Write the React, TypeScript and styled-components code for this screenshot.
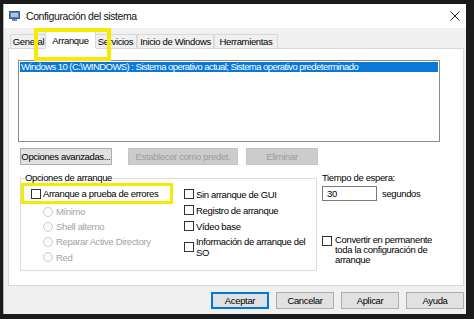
import styled, { createGlobalStyle } from "styled-components";

const GlobalStyle = createGlobalStyle`
  html, body { margin: 0; padding: 0; }
  body {
    background: #1b1b1b;
    font-family: "Liberation Sans", Arial, sans-serif;
    font-size: 9.5px;
    letter-spacing: -0.35px;
    color: #000;
  }
`;

const Window = styled.div`
  position: relative;
  margin: 4px 0 0 3px;
  width: 463px;
  height: 310px;
  background: #f0f0f0;
  border-left: 1px solid #b5b5b5;
  box-sizing: border-box;
  display: flex;
  flex-direction: column;
`;

const TitleBar = styled.div`
  height: 24px;
  flex: none;
  background: #fff;
  display: flex;
  align-items: center;
  padding: 0 0 0 5px;
  gap: 6px;
`;

const Title = styled.span`
  flex: 1;
  font-size: 10.5px;
  letter-spacing: -0.4px;
  color: #111;
`;

const CloseBtn = styled.span`
  width: 22px;
  display: flex;
  justify-content: center;
`;

const TabStrip = styled.div`
  display: flex;
  align-items: flex-end;
  height: 20px;
  flex: none;
  padding-left: 6px;
  position: relative;
  z-index: 1;
`;

const Tab = styled.div<{ $w: number; $active?: boolean }>`
  width: ${(p) => p.$w}px;
  height: ${(p) => (p.$active ? 18 : 15)}px;
  margin: 0 ${(p) => (p.$active ? -2 : 0)}px -1px;
  background: ${(p) => (p.$active ? "#fff" : "#f0f0f0")};
  border: 1px solid #d9d9d9;
  border-bottom: 1px solid ${(p) => (p.$active ? "#fff" : "#d9d9d9")};
  box-sizing: border-box;
  display: flex;
  align-items: center;
  justify-content: center;
  white-space: nowrap;
  position: relative;
  z-index: ${(p) => (p.$active ? 2 : 0)};
`;

const Panel = styled.div`
  margin: 0 2px 0 4px;
  height: 238px;
  flex: none;
  background: #fff;
  border: 1px solid #d9d9d9;
  box-sizing: border-box;
  display: flex;
  flex-direction: column;
  padding: 11px 0 0 9px;
  & > * { flex-shrink: 0; }
`;

const ListBox = styled.div`
  width: 422px;
  height: 82px;
  border: 1px solid #8c8c8c;
  box-sizing: border-box;
  padding: 1px;
`;

const ListItem = styled.div<{ $selected?: boolean }>`
  height: 10px;
  line-height: 10px;
  font-size: 9.5px;
  letter-spacing: -0.55px;
  padding-left: 1px;
  background: ${(p) => (p.$selected ? "#0a78d7" : "transparent")};
  color: ${(p) => (p.$selected ? "#fff" : "#000")};
  white-space: nowrap;
`;

const ButtonRow = styled.div`
  display: flex;
  gap: 8px;
  margin: 6px 0 0 2px;
`;

const Button = styled.div<{ $w: number; $mr?: number; $disabled?: boolean; $default?: boolean }>`
  width: ${(p) => p.$w}px;
  height: 17px;
  margin-right: ${(p) => p.$mr ?? 0}px;
  box-sizing: border-box;
  display: flex;
  align-items: center;
  justify-content: center;
  white-space: nowrap;
  background: ${(p) => (p.$disabled ? "#cccccc" : "#e1e1e1")};
  color: ${(p) => (p.$disabled ? "#9c9c9c" : "#000")};
  border: ${(p) =>
    p.$default ? "2px solid #0078d7" : p.$disabled ? "1px solid #c4c4c4" : "1px solid #adadad"};
`;

const Lower = styled.div`
  display: flex;
  margin: 7px 0 0 2px;
`;

const GroupBox = styled.fieldset`
  margin: 0;
  padding: 0;
  width: 297px;
  height: 99px;
  box-sizing: border-box;
  border: 1px solid #dcdcdc;
  display: flex;
  min-width: 0;
`;

const Legend = styled.legend`
  padding: 0 1px;
  margin-left: 3px;
  line-height: 12px;
`;

const Column = styled.div<{ $w?: number; $pt?: number }>`
  display: flex;
  flex-direction: column;
  width: ${(p) => (p.$w ? `${p.$w}px` : "auto")};
  padding-top: ${(p) => p.$pt ?? 0}px;
`;

const Highlight = styled.div`
  width: 152px;
  height: 21px;
  box-sizing: border-box;
  border: 3px solid #f6ea00;
  display: flex;
  align-items: center;
  padding-left: 7px;
  gap: 2px;
  margin-top: -1px;
  white-space: nowrap;
`;

const TabHighlight = styled.div`
  position: absolute;
  left: 30px;
  top: 24px;
  width: 77px;
  height: 33px;
  box-sizing: border-box;
  border: 4px solid #f6ea00;
  z-index: 5;
`;

const Check = styled.span`
  width: 10px;
  height: 10px;
  flex: none;
  box-sizing: border-box;
  border: 1px solid #333;
  background: #fff;
`;

const Radio = styled.span`
  width: 10px;
  height: 10px;
  flex: none;
  box-sizing: border-box;
  border: 1px solid #cdcdcd;
  border-radius: 50%;
  background: #fafafa;
`;

const Row = styled.div<{ $h: number; $indent?: number; $muted?: boolean }>`
  display: flex;
  align-items: center;
  gap: ${(p) => (p.$muted ? 3 : 2)}px;
  height: ${(p) => p.$h}px;
  padding-left: ${(p) => p.$indent ?? 0}px;
  color: ${(p) => (p.$muted ? "#a3a3a3" : "#000")};
  white-space: nowrap;
`;

const Wrap = styled.span`
  line-height: 11px;
  white-space: nowrap;
`;

const SideColumn = styled.div`
  display: flex;
  flex-direction: column;
  margin-left: 5px;
  width: 120px;
`;

const Label = styled.div`
  height: 12px;
  line-height: 12px;
`;

const TimeRow = styled.div`
  display: flex;
  align-items: center;
  gap: 5px;
  margin-top: 2px;
`;

const Input = styled.div`
  width: 55px;
  height: 15px;
  box-sizing: border-box;
  border: 1px solid #7a7a7a;
  padding-left: 4px;
  line-height: 13px;
  background: #fff;
`;

const PermRow = styled.div`
  display: flex;
  align-items: flex-start;
  gap: 3px;
  margin-top: 35px;
`;

const PermText = styled.span`
  line-height: 10px;
  white-space: nowrap;
  margin-top: -1px;
`;

const Footer = styled.div`
  display: flex;
  justify-content: flex-end;
  gap: 7px;
  margin-top: 6px;
  padding-right: 2px;
`;

function AppIcon() {
  return (
    <svg width="11" height="10" viewBox="0 0 11 10">
      <rect x="0.5" y="0.5" width="10" height="7" fill="#5b7fb4" stroke="#3a5a8a" />
      <rect x="2" y="2" width="7" height="4" fill="#a8c4e8" />
      <rect x="3" y="8" width="5" height="2" fill="#7b8794" />
    </svg>
  );
}

function CloseIcon() {
  return (
    <svg width="10" height="10" viewBox="0 0 10 10">
      <path d="M0.5 0.5L9.5 9.5M9.5 0.5L0.5 9.5" stroke="#222" strokeWidth="1" />
    </svg>
  );
}

export default function App() {
  return (
    <>
      <GlobalStyle />
      <Window>
        <TitleBar>
          <AppIcon />
          <Title>Configuración del sistema</Title>
          <CloseBtn>
            <CloseIcon />
          </CloseBtn>
        </TitleBar>
        <TabStrip>
          <Tab $w={37}>General</Tab>
          <Tab $w={51} $active>
            Arranque
          </Tab>
          <Tab $w={43}>Servicios</Tab>
          <Tab $w={77}>Inicio de Windows</Tab>
          <Tab $w={64}>Herramientas</Tab>
        </TabStrip>
        <Panel>
          <ListBox>
            <ListItem $selected>
              Windows 10 (C:\WINDOWS) : Sistema operativo actual; Sistema operativo predeterminado
            </ListItem>
          </ListBox>
          <ButtonRow>
            <Button $w={92} $mr={8}>
              Opciones avanzadas...
            </Button>
            <Button $w={110} $disabled>
              Establecer como predet.
            </Button>
            <Button $w={72} $disabled>
              Eliminar
            </Button>
          </ButtonRow>
          <Lower>
            <GroupBox>
              <Legend>Opciones de arranque</Legend>
              <Column $w={163}>
                <Highlight>
                  <Check />
                  Arranque a prueba de errores
                </Highlight>
                <Row $h={15} $indent={22} $muted>
                  <Radio />
                  Mínimo
                </Row>
                <Row $h={15} $indent={22} $muted>
                  <Radio />
                  Shell alterno
                </Row>
                <Row $h={15} $indent={22} $muted>
                  <Radio />
                  Reparar Active Directory
                </Row>
                <Row $h={16} $indent={22} $muted>
                  <Radio />
                  Red
                </Row>
              </Column>
              <Column $pt={2}>
                <Row $h={16}>
                  <Check />
                  Sin arranque de GUI
                </Row>
                <Row $h={16}>
                  <Check />
                  Registro de arranque
                </Row>
                <Row $h={16}>
                  <Check />
                  Vídeo base
                </Row>
                <Row $h={26}>
                  <Check />
                  <Wrap>
                    Información de arranque del
                    <br />
                    SO
                  </Wrap>
                </Row>
              </Column>
            </GroupBox>
            <SideColumn>
              <Label>Tiempo de espera:</Label>
              <TimeRow>
                <Input>30</Input>
                segundos
              </TimeRow>
              <PermRow>
                <Check />
                <PermText>
                  Convertir en permanente
                  <br />
                  toda la configuración de
                  <br />
                  arranque
                </PermText>
              </PermRow>
            </SideColumn>
          </Lower>
        </Panel>
        <Footer>
          <Button $w={58} $default>
            Aceptar
          </Button>
          <Button $w={58}>Cancelar</Button>
          <Button $w={58}>Aplicar</Button>
          <Button $w={58}>Ayuda</Button>
        </Footer>
        <TabHighlight />
      </Window>
    </>
  );
}
